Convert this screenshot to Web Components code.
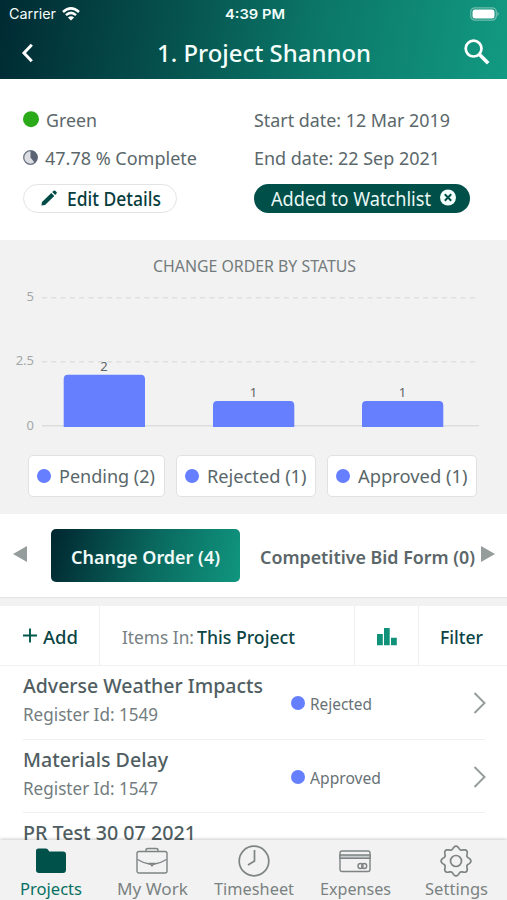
<!DOCTYPE html>
<html lang="en"><head><meta charset="utf-8"><title>Project Shannon</title>
<style>body{margin:0;width:507px;height:900px;overflow:hidden;background:#fff}</style></head>
<body><project-app></project-app>
<script>
const define=(name,html,setup)=>customElements.define(name,class extends HTMLElement{
  constructor(){super();this.attachShadow({mode:'open'})}
  connectedCallback(){
    this.shadowRoot.innerHTML=html.replace(/\{(\w+)\}/g,(m,k)=>this.getAttribute(k)??'');
    if(setup)setup(this);
  }
});

/* Single-line label condensed to occupy a given width. */
define('fit-text',`<style>:host{display:block;flex:none;white-space:pre;width:{w}px;font-size:{s}px;line-height:26px}span{display:inline-block;transform-origin:0 50%}</style><span><slot></slot></span>`,el=>{
  const s=el.shadowRoot.querySelector('span'),nat=s.getBoundingClientRect().width;
  if(nat)s.style.transform='scaleX('+((+el.getAttribute('w')+1)/nat)+')';
});

define('app-header',`<style>
:host{display:flex;flex-direction:column;height:79px;flex:none;color:#f4fffc;background:linear-gradient(100deg,#002a33 0%,#06544f 36%,#0b7768 62%,#129a82 100%)}
.status{display:grid;grid-template-columns:1fr auto 1fr;height:27px;align-items:center;font-family:Inter,"Liberation Sans",sans-serif;padding:0 7px 0 9px}
.l{display:flex;gap:7px;align-items:center}.r{justify-self:end;display:flex}
.bar{display:flex;align-items:center;justify-content:space-between;height:52px;padding:0 17px 0 20px}
svg{display:block}
</style>
<div class="status"><div class="l"><fit-text w="46" s="14">Carrier</fit-text><svg width="18" height="14" viewBox="0 0 18 14" fill="none" stroke="#fff" stroke-width="2.5"><path d="M1 5Q9-2.2 17 5M4 8.2Q9 3.6 14 8.2"/><path d="M9 13.5L5.9 10.5Q9 7.8 12.1 10.5Z" fill="#fff" stroke="none"/></svg></div>
<fit-text w="59" s="13.5" style="font-weight:600">4:39 PM</fit-text>
<div class="r"><svg width="30" height="14" viewBox="0 0 30 14"><rect x=".8" y=".8" width="25.5" height="12.4" rx="4" fill="none" stroke="#72bdae" stroke-width="1.2"/><rect x="2.5" y="2.4" width="22" height="9.2" rx="2.5" fill="#fff"/><path d="M27.5 4.8q2.4 2.2 0 4.4z" fill="#8bcabe"/></svg></div></div>
<div class="bar"><svg width="14" height="20" viewBox="0 0 14 20"><path d="M11.8 1.8L4 10l7.8 8.2" fill="none" stroke="#fff" stroke-width="3"/></svg>
<fit-text w="213" s="23.5" style="font-weight:500;padding-left:29px">1. Project Shannon</fit-text>
<svg width="26" height="26" viewBox="0 0 26 26" fill="none" stroke="#fff" style="margin-top:-2px"><circle cx="9.6" cy="9.6" r="7.9" stroke-width="2.7"/><path d="M15.2 15.2L24.2 24.2" stroke-width="3.6"/></svg></div>`);

define('project-info',`<style>
:host{display:grid;grid-template-columns:231px 1fr;grid-template-rows:38px 38px 42px;align-items:center;height:161px;flex:none;padding:22px 0 0 23px;box-sizing:border-box;color:#5b686b}
.c{display:flex;align-items:center}
.b{height:29px;box-sizing:border-box;border-radius:15px;display:flex;align-items:center;justify-self:start}
.e{width:154px;border:1.5px solid #e2e4e4;color:#073d3d;padding-left:17px;gap:10px}
.w{width:216px;background:#004f49;color:#e9f8f5;padding-left:17px;gap:10px;margin-left:-.5px}
.e fit-text,.w fit-text{margin-top:1px}
</style>
<div class="c" style="gap:7px"><svg width="16" height="18" viewBox="0 0 16 18"><circle cx="8" cy="8.2" r="8" fill="#2baa19"/></svg><fit-text w="50" s="18.5">Green</fit-text></div>
<fit-text w="195" s="18.5">Start date: 12 Mar 2019</fit-text>
<div class="c" style="gap:7px"><svg width="15" height="17" viewBox="0 0 15 17"><circle cx="7.5" cy="7.5" r="6.8" fill="#dcdee3" stroke="#6d7584" stroke-width="1.3"/><path d="M7.5 7.5V.8A6.7 6.7 0 0 1 11.7 12.8Z" fill="#5a6374"/></svg><fit-text w="151" s="18.5">47.78 % Complete</fit-text></div>
<fit-text w="185" s="18.5">End date: 22 Sep 2021</fit-text>
<div class="b e"><svg width="16" height="16" viewBox="0 0 16 16" fill="#004b45"><path d="M1 12L10.3 2.9 13.300 5.900 4 15 .4 15.4ZM11.2 2.1L12.700.7q.8-.6 1.500.1l1.300 1.300q.7.8 0 1.500L14.200 5Z"/></svg><fit-text w="93" s="19" style="font-weight:500">Edit Details</fit-text></div>
<div class="b w"><fit-text w="159" s="19">Added to Watchlist</fit-text><svg width="16" height="18" viewBox="0 0 16 18"><circle cx="8" cy="8.5" r="8" fill="#f2fffc"/><path d="M4.8 5.3l6.4 6.4m0-6.4l-6.4 6.4" stroke="#004f49" stroke-width="2"/></svg></div>`);

define('legend-chip',`<style>:host{display:flex;align-items:center;gap:8px;box-sizing:border-box;height:41.500px;width:{bw}px;padding:0 0 0 8px;border:1.5px solid #e0e1e1;border-radius:5px;background:#fff;color:#59676a}
i{width:14px;height:14px;border-radius:50%;background:#657fff}</style><i></i><fit-text w="{tw}" s="18.5">{label}</fit-text>`);

define('status-chart',`<style>
:host{display:block;height:274px;flex:none;background:#f2f2f2;overflow:hidden}
.t{display:flex;justify-content:center;color:#737b7c;height:26px;padding-top:13px}
svg{display:block;font-family:"Noto Sans",sans-serif}
.g{display:flex;gap:11px;padding:18px 0 0 27.5px}
</style>
<div class="t"><fit-text w="202" s="16">CHANGE ORDER BY STATUS</fit-text></div>
<svg width="507" height="158" viewBox="0 279 507 158">
<path d="M42 297.7H479M42 361.7H479" stroke="#dedfdf" stroke-width="1.4" stroke-dasharray="5 4.3"/><path d="M42 425.7H479" stroke="#dcdede" stroke-width="1.5"/>
<g fill="#657fff"><path d="M63.7 427V379q0-4.3 4.3-4.3h72.7q4.3 0 4.3 4.3v48zM213 427V405.3q0-4.3 4.3-4.3H290q4.300 0 4.300 4.300V427zM362 427V405.300q0-4.300 4.300-4.300H439q4.300 0 4.300 4.300V427z"/></g>
<g fill="#a2a8a8" font-size="13" text-anchor="end"><text x="34" y="301">5</text><text x="34" y="365">2.5</text><text x="34" y="429.500">0</text></g>
<g fill="#5e6667" font-size="13" text-anchor="middle"><text x="104" y="371">2</text><text x="253.500" y="397">1</text><text x="402.500" y="397">1</text></g></svg>
<div class="g"><legend-chip bw="137.500" tw="95" label="Pending (2)"></legend-chip><legend-chip bw="140" tw="98.500" label="Rejected (1)"></legend-chip><legend-chip bw="149.500" tw="108.500" label="Approved (1)"></legend-chip></div>`);

define('form-tabs',`<style>
:host{display:flex;align-items:center;height:84px;flex:none;box-sizing:border-box;padding:0 13px;background:#fff;border-bottom:1.5px solid #e2e4e4;font-weight:600;color:#5b6669}
.a{display:flex;flex:none;align-items:center;justify-content:center;width:189.500px;height:53px;border-radius:5px;background:linear-gradient(105deg,#00262f,#0a6b60 55%,#10967f);color:#f1fbf9;margin:0 20px 0 23.500px}
svg{margin-top:-4px;flex:none}fit-text{padding-top:2px}
</style><svg width="14" height="16"><path d="M0 8L14 0V16Z" fill="#949d9b"/></svg><div class="a"><fit-text w="148" s="18.500">Change Order (4)</fit-text></div><fit-text w="214" s="18.500">Competitive Bid Form (0)</fit-text><svg width="14" height="16" style="margin-left:7px"><path d="M14 8L0 0V16Z" fill="#949d9b"/></svg>`);

define('list-toolbar',`<style>
:host{display:flex;height:60px;flex:none;box-sizing:border-box;border-bottom:1.500px solid #eff1f0;background:#fff;color:#0b4544;font-weight:500}
div{display:flex;align-items:center;box-sizing:border-box;border-right:1.500px solid #eff1f0;padding-top:2px}
div:last-child{border:0}
</style><div style="width:100px;padding-left:23px;gap:6px"><svg width="14" height="18" viewBox="0 0 14 18"><path d="M0 7.500H14M7 .5V14.500" stroke="#00574c" stroke-width="1.900"/></svg><fit-text w="34" s="18.500">Add</fit-text></div>
<div style="width:255px;padding-left:21.500px;gap:4px"><fit-text w="71" s="18.500" style="color:#778082;font-weight:400">Items In:</fit-text><fit-text w="97" s="18.500">This Project</fit-text></div>
<div style="width:64px;padding-left:21.500px"><svg width="20" height="18" viewBox="0 0 20 18" fill="#10917a"><path d="M0 6h5.800v11.300H0zM7 0h5.700v17.300H7zM14 9.700h5.800v7.600H14z"/></svg></div>
<div style="padding-left:20.500px"><fit-text w="42" s="18.500">Filter</fit-text></div>`);

define('register-row',`<style>
:host{display:grid;grid-template-columns:268px 182px auto;align-items:center;height:73.700px;flex:none;box-sizing:border-box;margin:0 22px 0 23px;border-bottom:1.500px solid #eff1f1;color:#737d80}
.n{padding-bottom:5px}.t{font-weight:500;color:#505e62}.s{display:flex;align-items:center;gap:5px;padding-top:3px;color:#687276}
i{width:14px;height:14px;border-radius:50%;background:#657fff;margin-top:-1px}
</style><div class="n"><fit-text class="t" w="{tw}" s="20">{title}</fit-text><fit-text w="134" s="18" style="margin-top:2px">{sub}</fit-text></div>
<div class="s"><i></i><fit-text w="{sw}" s="16">{status}</fit-text></div><svg width="13" height="22" viewBox="0 0 13 22" style="margin-top:2px"><path d="M1.500 1L11.500 11 1.500 21" fill="none" stroke="#969d9c" stroke-width="2"/></svg>`);

define('nav-item',`<style>:host{display:flex;flex-direction:column;align-items:center;flex:1;color:#7b8282}.i{height:36px;display:flex;align-items:center}</style><div class="i"><slot></slot></div><fit-text w="{tw}" s="17">{label}</fit-text>`);

define('bottom-nav',`<style>
:host{position:absolute;left:0;right:0;bottom:0;height:60px;display:flex;background:#f2f2f2;box-shadow:0 -1px 3px #0003}
svg{display:block;fill:none;stroke:#7e8484;stroke-width:1.400}
</style>
<nav-item label="Projects" tw="61" style="color:#087061"><svg width="32" height="32" viewBox="0 0 32 32" style="margin-top:6px"><path d="M1 27V6Q1 3.500 3.500 3.500H11Q12.500 3.500 13.300 5L14.200 6.500H28Q31 6.500 31 9.500V24.500Q31 28 28 28H4Q1 28 1 25Z" style="fill:#005149;stroke:none"/></svg></nav-item>
<nav-item label="My Work" tw="70"><svg width="32" height="32" viewBox="0 0 32 32" style="margin-top:6px"><rect x="1" y="6.500" width="30" height="21.500" rx="2"/><path d="M10 6.500V5Q10 3.500 12 3.500H20Q22 3.500 22 5V6.500M1.500 14.500Q7 18 14.300 19.200M30.500 14.500Q25 18 17.700 19.200M14 18.500H18L16 21Z"/></svg></nav-item>
<nav-item label="Timesheet" tw="79"><svg width="32" height="32" viewBox="0 0 32 32" style="margin-top:5px"><circle cx="16" cy="16" r="14.800" stroke-width="1.700"/><path d="M16.500 5V16L10 20" stroke-width="1.700"/></svg></nav-item>
<nav-item label="Expenses" tw="70"><svg width="32" height="32" viewBox="0 0 32 32" style="margin-top:5px"><rect x="1" y="6" width="30" height="20.500" rx="2"/><path d="M1 10H31V13.300H1Z" fill="#c9cccc"/><circle cx="21.500" cy="21" r="2.500"/><circle cx="25.200" cy="21" r="2.500"/></svg></nav-item>
<nav-item label="Settings" tw="62"><svg width="32" height="32" viewBox="0 0 32 32" style="margin-top:5px"><path class="gear" stroke-width="1.700" stroke-linejoin="round"/><circle cx="16" cy="16" r="5.500" stroke-width="1.700"/></svg></nav-item>`,el=>{
  /* Eight rounded teeth: a circle whose radius ripples with the angle. */
  let d='';
  for(let i=0;i<144;i++){const a=i*Math.PI/72,r=13.400+1.500*Math.cos(8*a);d+=(i?'L':'M')+(16+r*Math.sin(a)).toFixed(2)+' '+(16-r*Math.cos(a)).toFixed(2)}
  el.shadowRoot.querySelector('.gear').setAttribute('d',d+'Z');
});

define('project-app',`<style>:host{display:flex;flex-direction:column;position:relative;width:507px;height:900px;overflow:hidden;background:#fff;font-family:"Noto Sans",sans-serif}.gap{height:8px;flex:none;background:#f2f2f2}</style>
<app-header></app-header><project-info></project-info><status-chart></status-chart><form-tabs></form-tabs><div class="gap"></div><list-toolbar></list-toolbar>
<register-row title="Adverse Weather Impacts" tw="239" sub="Register Id: 1549" status="Rejected" sw="61"></register-row>
<register-row title="Materials Delay" tw="144" sub="Register Id: 1547" status="Approved" sw="70"></register-row>
<register-row title="PR Test 30 07 2021" tw="172" sub="" status="" sw="1"></register-row>
<bottom-nav></bottom-nav>`);
</script></body></html>
